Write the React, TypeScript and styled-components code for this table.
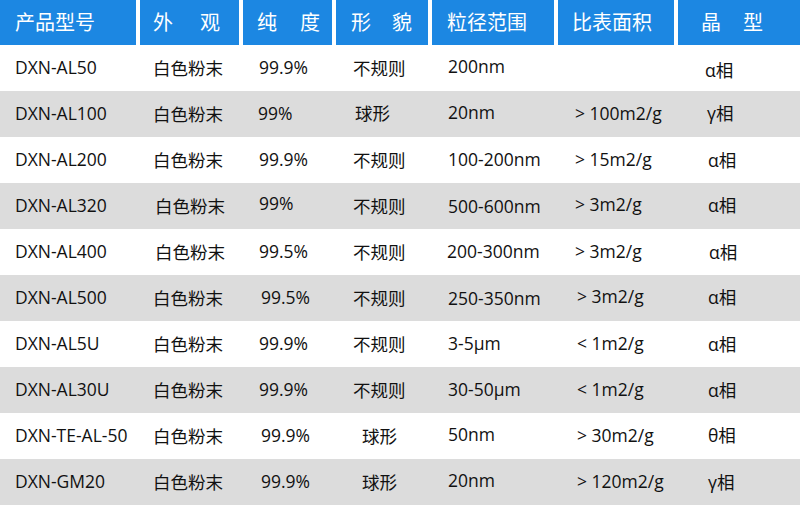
import { FC } from 'react';
import styled, { createGlobalStyle } from 'styled-components';

const GlobalStyle = createGlobalStyle`
  html, body {
    margin: 0;
    padding: 0;
    background: #ffffff;
  }
  body {
    font-family: 'Open Sans', 'Noto Sans CJK SC', sans-serif;
  }
`;

const COLS = '136px 99px 89px 92px 122px 116px 123px';
const PAD = [15, 13, 16, 17, 16, 17, 30];

const StyledTable = styled.div`
  width: 800px;
  height: 505px;
  overflow: hidden;
  display: flex;
  flex-direction: column;
`;
const StyledHeader = styled.div`
  display: grid;
  grid-template-columns: ${COLS};
  column-gap: 4px;
  height: 45px;
`;
const StyledHeadCell = styled.div<{ $pad: number; $gap: number }>`
  background-color: #1c87e2;
  color: #ffffff;
  font-family: 'Noto Sans CJK SC', sans-serif;
  font-size: 20px;
  display: flex;
  align-items: center;
  gap: ${props => props.$gap}px;
  padding-left: ${props => props.$pad}px;
  padding-bottom: 2px;
  box-sizing: border-box;
  white-space: nowrap;
`;
const StyledRow = styled.div<{ $alt: boolean }>`
  display: grid;
  grid-template-columns: ${COLS};
  column-gap: 4px;
  height: 46px;
  background-color: ${props => (props.$alt ? '#dcdcdc' : '#ffffff')};
`;
const StyledCell = styled.div<{ $pad: number; $dy: number }>`
  display: flex;
  align-items: center;
  padding-left: ${props => props.$pad}px;
  padding-top: ${props => Math.max(props.$dy, 0) * 2}px;
  padding-bottom: ${props => 2 + Math.max(-props.$dy, 0) * 2}px;
  box-sizing: border-box;
  font-size: 17.5px;
  color: #111111;
  white-space: nowrap;
`;

const headers: { parts: string[]; gap: number }[] = [
  { parts: ['产品型号'], gap: 0 },
  { parts: ['外', '观'], gap: 27 },
  { parts: ['纯', '度'], gap: 23 },
  { parts: ['形', '貌'], gap: 21 },
  { parts: ['粒径范围'], gap: 0 },
  { parts: ['比表面积'], gap: 0 },
  { parts: ['晶', '型'], gap: 22 },
];
const headPad = [15, 13, 14, 15, 15, 14, 23];

// each cell: [text, dx, dy]
type Cell = [string, number?, number?];

const rows: Cell[][] = [
  [['DXN-AL50'], ['白色粉末'], ['99.9%'], ['不规则'], ['200nm', 0, -1], [''], ['α相', -3, 2]],
  [['DXN-AL100'], ['白色粉末'], ['99%', -1], ['球形', 2, -1], ['20nm', 0, -1], ['> 100m2/g'], ['γ相', -1, -1]],
  [['DXN-AL200'], ['白色粉末'], ['99.9%'], ['不规则'], ['100-200nm'], ['> 15m2/g'], ['α相']],
  [['DXN-AL320'], ['白色粉末', 2], ['99%', 0, -2], ['不规则'], ['500-600nm', 0, 1], ['> 3m2/g', 0, -1], ['α相', 0, -1]],
  [['DXN-AL400'], ['白色粉末', 2], ['99.5%'], ['不规则'], ['200-300nm', -1], ['> 3m2/g'], ['α相', 1]],
  [['DXN-AL500'], ['白色粉末'], ['99.5%', 2], ['不规则'], ['250-350nm', 0, 1], ['> 3m2/g', 2, -1], ['α相', 0, -1]],
  [['DXN-AL5U'], ['白色粉末'], ['99.9%'], ['不规则'], ['3-5μm'], ['< 1m2/g', 2], ['α相']],
  [['DXN-AL30U'], ['白色粉末'], ['99.9%'], ['不规则'], ['30-50μm'], ['< 1m2/g', 2], ['α相']],
  [['DXN-TE-AL-50'], ['白色粉末'], ['99.9%', 2], ['球形', 9], ['50nm', 0, -1], ['> 30m2/g', 2], ['θ相', 0, -1]],
  [['DXN-GM20'], ['白色粉末'], ['99.9%', 2], ['球形', 9], ['20nm', 0, -1], ['> 120m2/g', 2], ['γ相']],
];

const App: FC = () => (
  <>
    <GlobalStyle />
    <StyledTable>
      <StyledHeader>
        {headers.map((h, i) => (
          <StyledHeadCell key={i} $pad={headPad[i]} $gap={h.gap}>
            {h.parts.map(p => (
              <span key={p}>{p}</span>
            ))}
          </StyledHeadCell>
        ))}
      </StyledHeader>
      {rows.map((row, r) => (
        <StyledRow key={r} $alt={r % 2 === 1}>
          {row.map(([text, dx = 0, dy = 0], c) => (
            <StyledCell key={c} $pad={PAD[c] + dx} $dy={dy}>
              {text}
            </StyledCell>
          ))}
        </StyledRow>
      ))}
    </StyledTable>
  </>
);

export default App;
